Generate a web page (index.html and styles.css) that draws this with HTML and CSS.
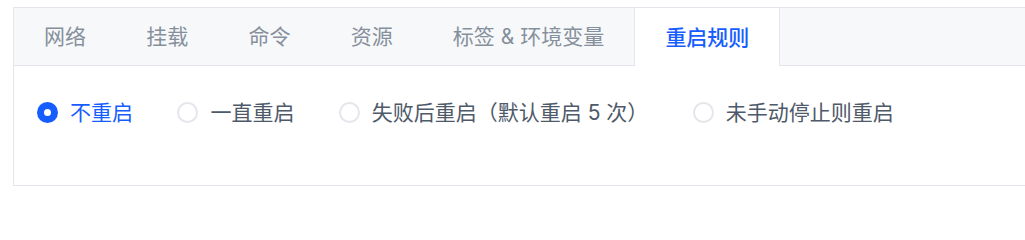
FILE: index.html
```html
<!DOCTYPE html>
<html lang="zh-CN">
<head>
<meta charset="utf-8">
<link rel="stylesheet" href="styles.css">
</head>
<body>
<div class="tabs">
  <div class="tab-bar">
    <div class="tab">网络</div>
    <div class="tab">挂载</div>
    <div class="tab">命令</div>
    <div class="tab">资源</div>
    <div class="tab">标签 &amp; 环境变量</div>
    <div class="tab active">重启规则</div>
  </div>
  <div class="pane">
    <div class="radio-group">
      <label class="radio checked"><span class="mask"></span><span class="text">不重启</span></label>
      <label class="radio"><span class="mask"></span><span class="text">一直重启</span></label>
      <label class="radio"><span class="mask"></span><span class="text">失败后重启（默认重启 5 次）</span></label>
      <label class="radio"><span class="mask"></span><span class="text">未手动停止则重启</span></label>
    </div>
  </div>
</div>
</body>
</html>
```

FILE: styles.css
```css
html, body {
  margin: 0;
  padding: 0;
  background: #ffffff;
  overflow: hidden;
}
body {
  padding: 7px 0 0 13px;
  font-family: Inter, "Noto Sans CJK SC", sans-serif;
  font-size: 21px;
}
.tabs {
  width: 1060px;
  border: 1px solid #e5e6eb;
  box-sizing: border-box;
}
.tab-bar {
  display: flex;
  height: 57px;
  background: #f7f8fa;
  border-bottom: 1px solid #e5e6eb;
}
.tab {
  display: flex;
  align-items: center;
  padding: 0 30.1px;
  color: #86909c;
  white-space: nowrap;
  line-height: 1;
}
.tab.active {
  background: #ffffff;
  color: #165dff;
  font-weight: 500;
  border-left: 1px solid #e5e6eb;
  border-right: 1px solid #e5e6eb;
  margin-bottom: -1px;
}
.pane {
  height: 119px;
  box-sizing: border-box;
  padding: 36px 0 0 23px;
}
.radio-group {
  display: flex;
  gap: 44.4px;
}
.radio {
  display: flex;
  align-items: center;
  height: 21px;
  gap: 12px;
  color: #4e5969;
  line-height: 21px;
  white-space: nowrap;
}
.mask {
  width: 21px;
  height: 21px;
  box-sizing: border-box;
  border-radius: 50%;
  border: 2px solid #e5e6eb;
  background: #ffffff;
  flex: none;
}
.radio.checked {
  color: #165dff;
}
.radio.checked .mask {
  border: 7.5px solid #165dff;
}
```
